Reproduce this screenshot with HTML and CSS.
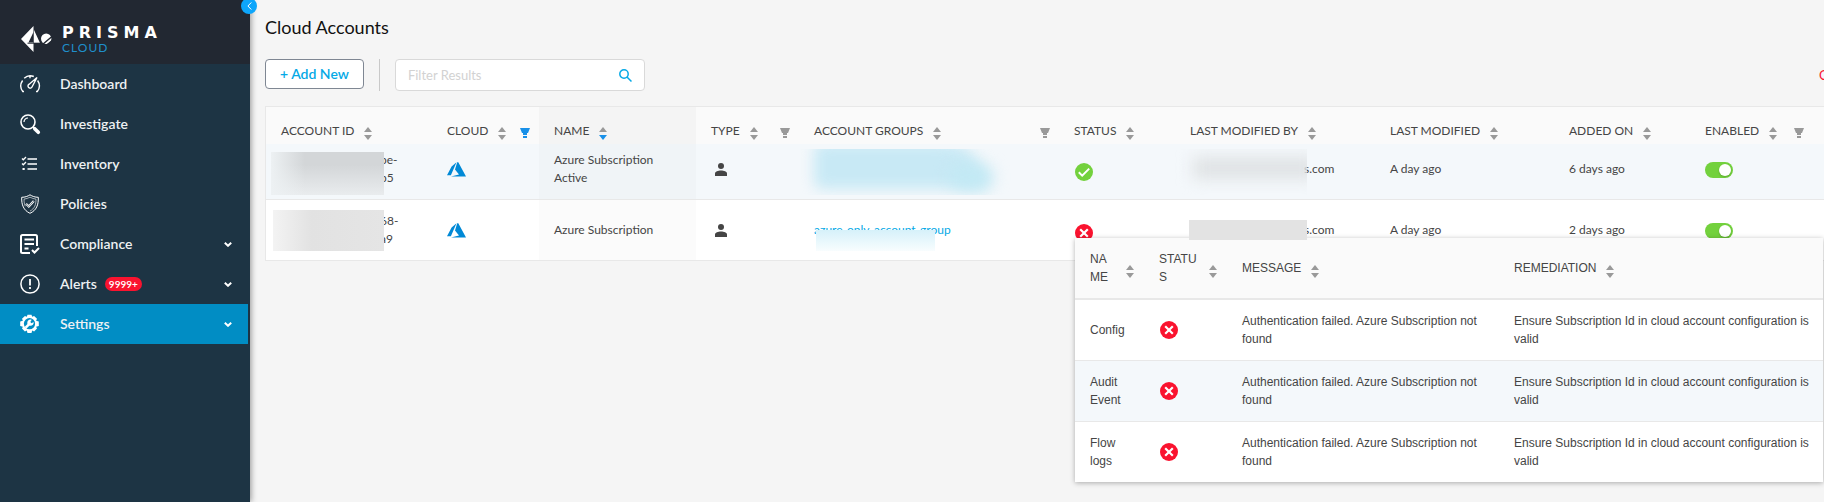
FILE: index.html
```html
<!DOCTYPE html>
<html lang="en">
<head>
<meta charset="utf-8">
<title>Cloud Accounts</title>
<link rel="stylesheet" href="styles.css">
</head>
<body>
<svg class="defs" aria-hidden="true">
  <symbol id="sort" viewBox="0 0 8 13"><path class="up" d="M4 0 8 5H0z"/><path class="down" d="M0 8h8L4 13z"/></symbol>
  <symbol id="filter" viewBox="0 0 10 10"><path d="M0 0h10L8 5H2zM3 5h4v2H3zM3 8h4v2H3z"/></symbol>
  <symbol id="azure" viewBox="0 0 19 15"><path d="M9.500.2 4.600 4.400 0 13.200h3.900zM10.200.2 8 7.400l4 5L4 14.500h15L11.300.2z"/></symbol>
  <symbol id="person" viewBox="0 0 12 13"><circle cx="6" cy="3" r="3"/><path d="M0 13v-2.500C0 8.500 3 7.500 6 7.500s6 1 6 3V13z"/></symbol>
  <symbol id="ok" viewBox="0 0 18 18"><circle cx="9" cy="9" r="9" fill="#73d13d"/><path d="m3.800 9.300 3.400 3.300 7-7" fill="none" stroke="#fff" stroke-width="2"/></symbol>
  <symbol id="fail" viewBox="0 0 18 18"><circle cx="9" cy="9" r="9" fill="#fa132f"/><path d="m5.200 5.200 7.600 7.600m0-7.600-7.600 7.600" fill="none" stroke="#fff" stroke-width="2.200"/></symbol>
  <symbol id="chevron" viewBox="0 0 8 5"><path d="m.8.800 3.200 3 3.200-3" fill="none" stroke="#fff" stroke-width="2"/></symbol>
</svg>
<div class="app">
  <aside class="sidebar">
    <header class="brand">
      <svg class="brand-mark" viewBox="0 0 30 26"><path fill="#fff" d="M12.500 0v26L0 13zM13 4l6 13h-6z"/><path d="M7.500 16.500h5V6z" fill="#222832"/><path d="M6.500 17.200h13" stroke="#222832" stroke-width="1"/><circle cx="25.200" cy="12.800" r="5.200" fill="#fff"/><path d="m21.500 18.500 9.500-8M24.500 20l8-6.500" stroke="#222832" stroke-width="1.500"/></svg>
      <div class="brand-text"><span class="brand-name">PRISMA</span><span class="brand-sub">CLOUD</span></div>
    </header>
    <nav class="nav">
      <a href="#"><svg class="ico" viewBox="0 0 20 20"><g fill="none" stroke="#fff" stroke-width="1.400"><path d="M4 17.500H2.800A9.300 9.300 0 0 1 2.600 6.500M4.200 4.300A9 9 0 0 1 13.800 2.500M17.600 6.500a9.300 9.300 0 0 1-.3 11H16M10 1.500v2.700"/><path d="m17 3.500-7.800 6.700a2.100 2.100 0 1 0 2.800 2.800z"/></g></svg><span>Dashboard</span></a>
      <a href="#"><svg class="ico" viewBox="0 0 20 20"><g fill="none" stroke="#fff"><circle cx="8" cy="8" r="7" stroke-width="1.600"/><path d="M4 8a4 4 0 0 1 4-4" stroke-width="1.200"/><path d="m12.800 12.800 2 2" stroke-width="1.500"/><path d="m14.700 14.700 3.600 3.600" stroke-width="3.600" stroke-linecap="round"/></g></svg><span>Investigate</span></a>
      <a href="#"><svg class="ico" viewBox="0 0 20 20"><g fill="none" stroke="#fff" stroke-width="1.700"><path d="M7.500 5H17M7.500 10H17M7.500 15H17"/><path d="m2 4.500 1.300 1.300L6 3M2 9.500l1.300 1.300L6 8" stroke-width="1.300"/><path d="M2.500 15h2.200" stroke-width="2"/></g></svg><span>Inventory</span></a>
      <a href="#"><svg class="ico" viewBox="0 0 20 20"><g fill="none" stroke="#fff"><path d="M10 .8c2.200 1.500 5 2.500 8.300 2.500.3 7.500-1.800 13-8.300 16C3.500 16.300 1.400 10.800 1.700 3.300 5 3.300 7.800 2.300 10 .8z" stroke-width="1"/><path d="M10 3.200c2 1 3.800 1.700 6 1.900.1 5.500-1.500 9.500-6 12M10 3.200c-2 1-3.800 1.700-6 1.900 0 3 .4 5.300 1.300 7.200" stroke-width=".6"/><path d="m6 9.800 2.800 2.700 5-5.500" stroke-width="2.200"/><path d="m6 9.800 2.800 2.700 5-5.500" stroke="#1d3444" stroke-width=".6"/></g></svg><span>Policies</span></a>
      <a href="#"><svg class="ico" viewBox="0 0 20 20"><g fill="none" stroke="#fff" stroke-width="2"><path d="M10 19H2.500Q1 19 1 17.500V2.500Q1 1 2.500 1h13Q17 1 17 2.500V12M4.500 5.500h9.500M4.500 10h9.500M4.500 14.500h4"/><path d="m12 16 2.500 2.500 4.500-4.500"/></g></svg><span>Compliance</span><svg class="chev"><use href="#chevron"/></svg></a>
      <a href="#"><svg class="ico" viewBox="0 0 20 20"><circle cx="10" cy="10" r="9.100" fill="none" stroke="#fff" stroke-width="1.500"/><path d="M10 5v6.500M10 13v2" stroke="#fff" stroke-width="1.800"/></svg><span>Alerts</span><span class="badge">9999+</span><svg class="chev"><use href="#chevron"/></svg></a>
      <a href="#" class="active"><svg class="ico" viewBox="0 0 20 20"><path d="M7.500.8h4l.7 2 1.900-.9 2.900 2.900-.9 1.900 2.700.8v4.400l-2.700.8.9 1.900-2.900 2.900-1.900-.9-.7 2.500H7.500l-.7-2.500-1.900.9L2 14.600l.9-1.900-2.700-.8V7.500l2.700-.8L2 4.800l2.900-2.900 1.900.9z" fill="#fff"/><circle cx="9.500" cy="9.700" r="5.600" fill="#018dc4"/><path d="M5.500 13.800 9.600 9.600" stroke="#fff" stroke-width="2.600"/><path d="M11.800 5.700A3.200 3.200 0 1 0 13.600 8l-2 1.200-1.300-1.300z" fill="#fff"/></svg><span>Settings</span><svg class="chev"><use href="#chevron"/></svg></a>
    </nav>
    <button class="collapse" aria-label="Collapse menu"><svg viewBox="0 0 5 8"><path d="M4.300.5.900 4l3.400 3.500" fill="none" stroke="#fff"/></svg></button>
  </aside>
  <main class="main">
    <h1>Cloud Accounts</h1>
    <div class="toolbar">
      <button class="add">+ Add New</button>
      <span class="divider"></span>
      <label class="search"><input type="text" placeholder="Filter Results" aria-label="Filter Results"><svg viewBox="0 0 13 13"><g fill="none" stroke="#05a9e6" stroke-width="1.500"><circle cx="5" cy="5" r="4.200"/><path d="m8 8 4.500 4.500"/></g></svg></label>
      <a class="clear" href="#">C</a>
    </div>
    <div class="grid-wrap">
      <table class="accounts">
        <colgroup><col class="c-id"><col class="c-cloud"><col class="c-name"><col class="c-type"><col class="c-groups"><col class="c-status"><col class="c-by"><col class="c-mod"><col class="c-added"><col class="c-enabled"></colgroup>
        <thead><tr>
          <th><div class="head">ACCOUNT ID<svg class="sort"><use href="#sort"/></svg></div></th>
          <th><div class="head">CLOUD<svg class="sort"><use href="#sort"/></svg><svg class="filter on"><use href="#filter"/></svg></div></th>
          <th class="sorted"><div class="head">NAME<svg class="sort desc" viewBox="0 0 8 13"><path class="up" d="M4 0 8 5H0z"/><path class="down" d="M0 8h8L4 13z"/></svg></div></th>
          <th><div class="head">TYPE<svg class="sort"><use href="#sort"/></svg><svg class="filter"><use href="#filter"/></svg></div></th>
          <th><div class="head">ACCOUNT GROUPS<svg class="sort"><use href="#sort"/></svg><svg class="filter"><use href="#filter"/></svg></div></th>
          <th><div class="head">STATUS<svg class="sort"><use href="#sort"/></svg></div></th>
          <th><div class="head">LAST MODIFIED BY<svg class="sort"><use href="#sort"/></svg></div></th>
          <th><div class="head">LAST MODIFIED<svg class="sort"><use href="#sort"/></svg></div></th>
          <th><div class="head">ADDED ON<svg class="sort"><use href="#sort"/></svg></div></th>
          <th class="last"><div class="head">ENABLED<svg class="sort"><use href="#sort"/></svg><svg class="filter"><use href="#filter"/></svg></div></th>
        </tr></thead>
        <tbody>
          <tr class="first">
            <td class="id">pe-<br>b5<span class="mask mask-id"></span></td>
            <td><svg class="azure"><use href="#azure"/></svg></td>
            <td class="sorted">Azure Subscription Active</td>
            <td><svg class="person"><use href="#person"/></svg></td>
            <td><span class="mask mask-groups"></span></td>
            <td><svg class="state"><use href="#ok"/></svg></td>
            <td class="by">s.com<span class="mask mask-by"></span></td>
            <td>A day ago</td>
            <td>6 days ago</td>
            <td><input class="switch" type="checkbox" checked aria-label="Enabled"></td>
          </tr>
          <tr>
            <td class="id">68-<br>a9<span class="mask mask-id2"></span></td>
            <td><svg class="azure"><use href="#azure"/></svg></td>
            <td class="sorted">Azure Subscription</td>
            <td><svg class="person"><use href="#person"/></svg></td>
            <td><a class="group" href="#">azure-only-account-group</a><span class="mask mask-group2"></span></td>
            <td><svg class="state"><use href="#fail"/></svg></td>
            <td class="by">s.com<span class="mask mask-by2"></span></td>
            <td>A day ago</td>
            <td>2 days ago</td>
            <td><input class="switch" type="checkbox" checked aria-label="Enabled"></td>
          </tr>
        </tbody>
      </table>
      <div class="popover">
        <table class="details">
          <colgroup><col class="d-name"><col class="d-status"><col class="d-message"><col class="d-fix"></colgroup>
          <thead><tr>
            <th><div class="head"><span class="wrap">NAME</span><svg class="sort"><use href="#sort"/></svg></div></th>
            <th><div class="head"><span class="wrap">STATUS</span><svg class="sort"><use href="#sort"/></svg></div></th>
            <th><div class="head">MESSAGE<svg class="sort"><use href="#sort"/></svg></div></th>
            <th><div class="head">REMEDIATION<svg class="sort"><use href="#sort"/></svg></div></th>
          </tr></thead>
          <tbody>
            <tr><td>Config</td><td><svg class="state"><use href="#fail"/></svg></td><td>Authentication failed. Azure Subscription not found</td><td>Ensure Subscription Id in cloud account configuration is valid</td></tr>
            <tr><td>Audit Event</td><td><svg class="state"><use href="#fail"/></svg></td><td>Authentication failed. Azure Subscription not found</td><td>Ensure Subscription Id in cloud account configuration is valid</td></tr>
            <tr><td>Flow logs</td><td><svg class="state"><use href="#fail"/></svg></td><td>Authentication failed. Azure Subscription not found</td><td>Ensure Subscription Id in cloud account configuration is valid</td></tr>
          </tbody>
        </table>
      </div>
    </div>
  </main>
</div>
</body>
</html>
```
FILE: styles.css
```css
* { box-sizing: border-box; }
body { margin: 0; background: #f5f5f5; color: #454545; font: 13px/18px Lato, sans-serif; }
a { text-decoration: none; }
svg { display: block; flex: none; overflow: visible; }
.defs { display: none; }
.app { display: flex; min-height: 100vh; }

.sidebar { position: relative; z-index: 1; flex: none; width: 250px; background: #1d3444; box-shadow: 1px 0 6px rgba(0,0,0,.4); }
.brand { display: flex; align-items: flex-start; gap: 11px; height: 64px; padding: 26px 0 0 21px; background: #222832; }
.brand-mark { width: 30px; height: 26px; }
.brand-text { display: flex; flex-direction: column; }
.brand-name { color: #fff; font: bold 16px/13px "DejaVu Sans", sans-serif; letter-spacing: 5px; }
.brand-sub { margin-top: 3px; color: #1f8fcb; font-size: 12px; line-height: 12px; letter-spacing: 1px; }
.nav { display: flex; flex-direction: column; padding-right: 2px; }
.nav a { display: flex; align-items: center; height: 40px; padding: 0 16px 0 20px; color: #eef1f3; font-size: 14px; font-weight: 600; }
.nav a.active { background: #018dc4; }
.ico { width: 20px; height: 20px; margin-right: 20px; }
.chev { width: 8px; height: 5px; margin-left: auto; }
.badge { margin-left: 8px; padding: 0 4px; border-radius: 7px; background: #fa132f; color: #fff; font-size: 10px; line-height: 14px; }
.collapse { position: absolute; top: -2px; right: -7px; display: flex; align-items: center; justify-content: center; width: 16px; height: 16px; padding: 0; border: 0; border-radius: 50%; background: #0da6fb; }
.collapse svg { width: 5px; height: 8px; }

.main { flex: 1; min-width: 0; padding: 15px 0 0 15px; }
h1 { margin: 0 0 20px; color: #111; font-size: 18px; line-height: 24px; font-weight: 400; }
.toolbar { display: flex; align-items: flex-start; height: 32px; margin-bottom: 15px; }
.add { height: 30px; padding: 0 14px; border: 1px solid #7f8793; border-radius: 4px; background: #fff; color: #05a9e6; font: 600 14px/18px Lato, sans-serif; }
.divider { width: 1px; height: 32px; margin: 0 15px; background: #c9c9c9; }
.search { display: flex; align-items: center; width: 250px; height: 32px; padding: 0 12px; border: 1px solid #d9d9d9; border-radius: 4px; background: #fff; }
.search input { flex: 1; min-width: 0; padding: 0; border: 0; outline: 0; background: none; font: 13px/18px Lato, sans-serif; }
.search input::placeholder { color: #d2d2d2; }
.search svg { width: 13px; height: 13px; }
.clear { width: 5px; margin: 7px 0 0 auto; overflow: hidden; color: #fa132f; }

.grid-wrap { position: relative; }
table { width: 100%; border-collapse: separate; border-spacing: 0; table-layout: fixed; }
.accounts { border: 1px solid #e8e8e8; border-right: 0; }
.c-id { width: 166px; } .c-cloud { width: 107px; } .c-name { width: 157px; } .c-type { width: 103px; } .c-groups { width: 260px; }
.c-status { width: 116px; } .c-by { width: 200px; } .c-mod { width: 179px; } .c-added { width: 136px; } .c-enabled { width: 134px; }
th { padding: 0 9px 0 15px; background: #fafafa; font-size: 12px; font-weight: 400; text-align: left; }
td { padding: 12px 15px; background: #fff; font-size: 12px; }
.accounts th { padding-top: 14px; padding-bottom: 4px; }
.accounts th.last { padding-right: 20px; }
.accounts td { position: relative; height: 60px; }
.accounts .first td { height: 56px; padding-top: 7px; background: #f4f8fb; border-bottom: 1px solid #e8e8e8; }
.accounts th.sorted { background: #f4f4f4; }
.accounts td.sorted { background: #fbfbfb; }
.accounts .first td.sorted { background: #f0f4f7; }
.head { display: flex; align-items: center; }
.sort { width: 8px; height: 13px; margin: 6px 0 0 10px; fill: #999; }
.sort.desc .down { fill: #1890e8; }
.filter { width: 10px; height: 10px; margin: 4px 0 0 auto; fill: #999; }
.filter.on { fill: #1890e8; }
.azure { width: 19px; height: 15px; fill: #0089d6; }
.person { width: 12px; height: 13px; margin-left: 4px; fill: #454545; }
.state { width: 18px; height: 18px; margin-left: 1px; }
.accounts .state { margin-top: 6px; }
.group { color: #05a9e6; }
.switch { appearance: none; display: block; width: 28px; height: 16px; margin: 2px 0 0; padding: 2px; border-radius: 8px; background: #73d13d; }
.switch::before { content: ""; display: block; width: 12px; height: 12px; margin-left: auto; border-radius: 50%; background: #fff; box-shadow: 0 1px 2px rgba(0,0,0,.2); }

.accounts .id { padding-left: 114px; }
.accounts .by { padding-left: 129px; }
.mask { position: absolute; overflow: hidden; }
.mask-id { left: 5px; top: 8px; width: 113px; height: 43px; background: linear-gradient(90deg, #edf1f3, transparent 30%), linear-gradient(#d3d6d8 30%, #e9ecee); }
.mask-id2 { left: 7px; top: 10px; width: 111px; height: 41px; background: linear-gradient(90deg, #f3f3f3, #e2e2e2 35%, #e5e5e5); }
.mask-groups { left: 1px; top: 5px; width: 215px; height: 46px; }
.mask-groups::before { content: ""; position: absolute; inset: -6px 30px 6px 14px; border-radius: 8px 40px 0 8px; background: #c8e9f5; filter: blur(7px); }
.mask-groups::after { content: ""; position: absolute; inset: 16px 22px 6px 150px; border-radius: 12px; background: #c2e9f4; filter: blur(8px); }
.mask-group2 { left: 17px; top: 30px; width: 119px; height: 21px; background: linear-gradient(#d6f1fa, #f8fdfe); }
.mask-by { left: 0; top: 5px; width: 132px; height: 46px; }
.mask-by::before { content: ""; position: absolute; inset: 8px -10px 16px 18px; background: #dfe2e4; filter: blur(8px); }
.mask-by2 { z-index: 2; left: 14px; top: 20px; width: 118px; height: 20px; background: #e3e3e3; }

.popover { position: absolute; z-index: 1; left: 810px; right: 1px; top: 132px; background: #fff; box-shadow: 0 1px 5px rgba(0,0,0,.3); font-family: "Liberation Sans", Arial, sans-serif; }
.d-name { width: 69px; } .d-status { width: 83px; } .d-message { width: 272px; } .d-fix { width: 324px; }
.details th { padding: 12px 10px 12px 15px; border-bottom: 2px solid #e8e8e8; }
.details td { padding-right: 5px; }
.details tr + tr td { border-top: 1px solid #e8e8e8; }
.details tbody tr:nth-child(2) td { background: #f4f8fb; }
.wrap { flex: 1; word-break: break-all; }
```
